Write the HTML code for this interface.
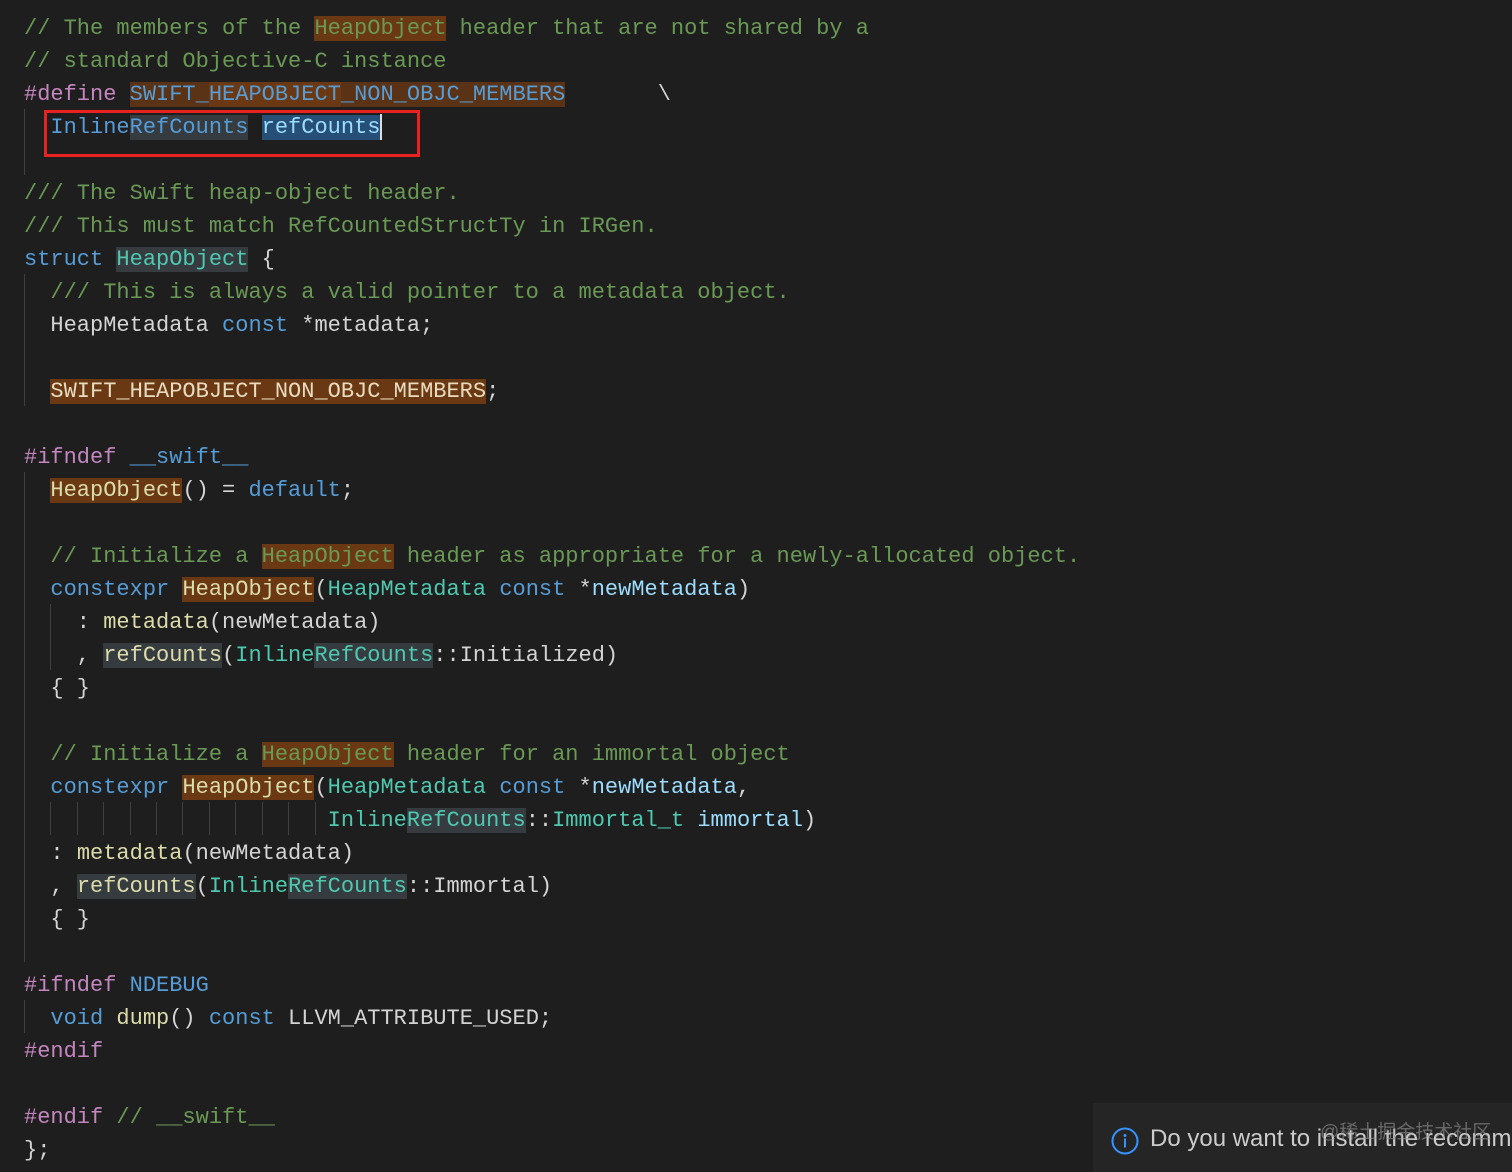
<!DOCTYPE html>
<html><head><meta charset="utf-8"><style>
html,body{margin:0;padding:0;background:#1e1e1e;width:1512px;height:1172px;overflow:hidden}
.l{position:absolute;left:24px;height:33px;line-height:33px;font-family:"Liberation Mono",monospace;font-size:22px;white-space:pre;color:#d4d4d4;letter-spacing:0;margin-top:2px}
.c{color:#6a9955}.k{color:#569cd6}.t{color:#4ec9b0}.f{color:#dcdcaa}.v{color:#9cdcfe}.m{color:#c586c0}
.o{background:#6a3812}.o2{background:#5a3215}.g{background:#363b40}.s{background:#264f78}
.guide{position:absolute;width:1px;background:#404040}
</style></head><body>
<div class="l" style="top:10px"><span class="c">// The members of the <span class="o">HeapObject</span> header that are not shared by a</span></div>
<div class="l" style="top:43px"><span class="c">// standard Objective-C instance</span></div>
<div class="l" style="top:76px"><span class="m">#define</span> <span class="k"><span class="o2">SWIFT_</span><span class="o">HEAPOBJECT</span><span class="o2">_NON_OBJC_MEMBERS</span></span>       \</div>
<div class="l" style="top:109px">  <span class="k">Inline<span class="g">RefCounts</span></span> <span class="v s">refCounts</span><span style="display:inline-block;width:2px;height:26px;background:#ddd;vertical-align:middle"></span></div>
<div class="l" style="top:175px"><span class="c">/// The Swift heap-object header.</span></div>
<div class="l" style="top:208px"><span class="c">/// This must match RefCountedStructTy in IRGen.</span></div>
<div class="l" style="top:241px"><span class="k">struct</span> <span class="t g">HeapObject</span> {</div>
<div class="l" style="top:274px">  <span class="c">/// This is always a valid pointer to a metadata object.</span></div>
<div class="l" style="top:307px">  HeapMetadata <span class="k">const</span> *metadata;</div>
<div class="l" style="top:373px">  <span class="o" style="color:#e8dcc0">SWIFT_HEAPOBJECT_NON_OBJC_MEMBERS</span>;</div>
<div class="l" style="top:439px"><span class="m">#ifndef</span> <span class="k">__swift__</span></div>
<div class="l" style="top:472px">  <span class="f o">HeapObject</span>() = <span class="k">default</span>;</div>
<div class="l" style="top:538px">  <span class="c">// Initialize a <span class="o">HeapObject</span> header as appropriate for a newly-allocated object.</span></div>
<div class="l" style="top:571px">  <span class="k">constexpr</span> <span class="f o">HeapObject</span>(<span class="t">HeapMetadata</span> <span class="k">const</span> *<span class="v">newMetadata</span>)</div>
<div class="l" style="top:604px">    : <span class="f">metadata</span>(newMetadata)</div>
<div class="l" style="top:637px">    , <span class="f g">refCounts</span>(<span class="t">Inline<span class="g">RefCounts</span></span>::Initialized)</div>
<div class="l" style="top:670px">  { }</div>
<div class="l" style="top:736px">  <span class="c">// Initialize a <span class="o">HeapObject</span> header for an immortal object</span></div>
<div class="l" style="top:769px">  <span class="k">constexpr</span> <span class="f o">HeapObject</span>(<span class="t">HeapMetadata</span> <span class="k">const</span> *<span class="v">newMetadata</span>,</div>
<div class="l" style="top:802px">                       <span class="t">Inline<span class="g">RefCounts</span></span>::<span class="t">Immortal_t</span> <span class="v">immortal</span>)</div>
<div class="l" style="top:835px">  : <span class="f">metadata</span>(newMetadata)</div>
<div class="l" style="top:868px">  , <span class="f g">refCounts</span>(<span class="t">Inline<span class="g">RefCounts</span></span>::Immortal)</div>
<div class="l" style="top:901px">  { }</div>
<div class="l" style="top:967px"><span class="m">#ifndef</span> <span class="k">NDEBUG</span></div>
<div class="l" style="top:1000px">  <span class="k">void</span> <span class="f">dump</span>() <span class="k">const</span> LLVM_ATTRIBUTE_USED;</div>
<div class="l" style="top:1033px"><span class="m">#endif</span></div>
<div class="l" style="top:1099px"><span class="m">#endif</span> <span class="c">// __swift__</span></div>
<div class="l" style="top:1132px">};</div>

<div class="guide" style="left:24px;top:109px;height:66px"></div>
<div class="guide" style="left:24px;top:274px;height:132px"></div>
<div class="guide" style="left:24px;top:472px;height:490px"></div>
<div class="guide" style="left:24px;top:1000px;height:33px"></div>
<div class="guide" style="left:50px;top:604px;height:66px"></div>
<div class="guide" style="left:50px;top:802px;height:33px"></div>
<div class="guide" style="left:77px;top:802px;height:33px"></div>
<div class="guide" style="left:103px;top:802px;height:33px"></div>
<div class="guide" style="left:130px;top:802px;height:33px"></div>
<div class="guide" style="left:156px;top:802px;height:33px"></div>
<div class="guide" style="left:182px;top:802px;height:33px"></div>
<div class="guide" style="left:209px;top:802px;height:33px"></div>
<div class="guide" style="left:235px;top:802px;height:33px"></div>
<div class="guide" style="left:262px;top:802px;height:33px"></div>
<div class="guide" style="left:288px;top:802px;height:33px"></div>
<div class="guide" style="left:315px;top:802px;height:33px"></div>

<div style="position:absolute;left:44px;top:110px;width:370px;height:41px;border:3px solid #e8231f"></div>

<div style="position:absolute;left:1093px;top:1103px;width:419px;height:69px;background:#252526;overflow:hidden">
<svg style="position:absolute;left:17px;top:23px" width="30" height="30" viewBox="0 0 30 30"><circle cx="15" cy="15" r="12.5" fill="none" stroke="#3794ff" stroke-width="2"/><circle cx="15" cy="9.5" r="1.5" fill="#3794ff"/><rect x="14" y="12.5" width="2" height="9" fill="#3794ff"/></svg>
<div style="position:absolute;left:57px;top:22px;font-family:'Liberation Sans',sans-serif;font-size:24px;color:#cccccc;white-space:nowrap">Do you want to install the recommended extensions</div>
<div style="position:absolute;left:227px;top:14px;font-family:'Liberation Sans','Noto Sans CJK SC',sans-serif;font-size:19px;color:rgba(150,150,150,0.6);white-space:nowrap">@稀土掘金技术社区</div>
</div>
</body></html>
